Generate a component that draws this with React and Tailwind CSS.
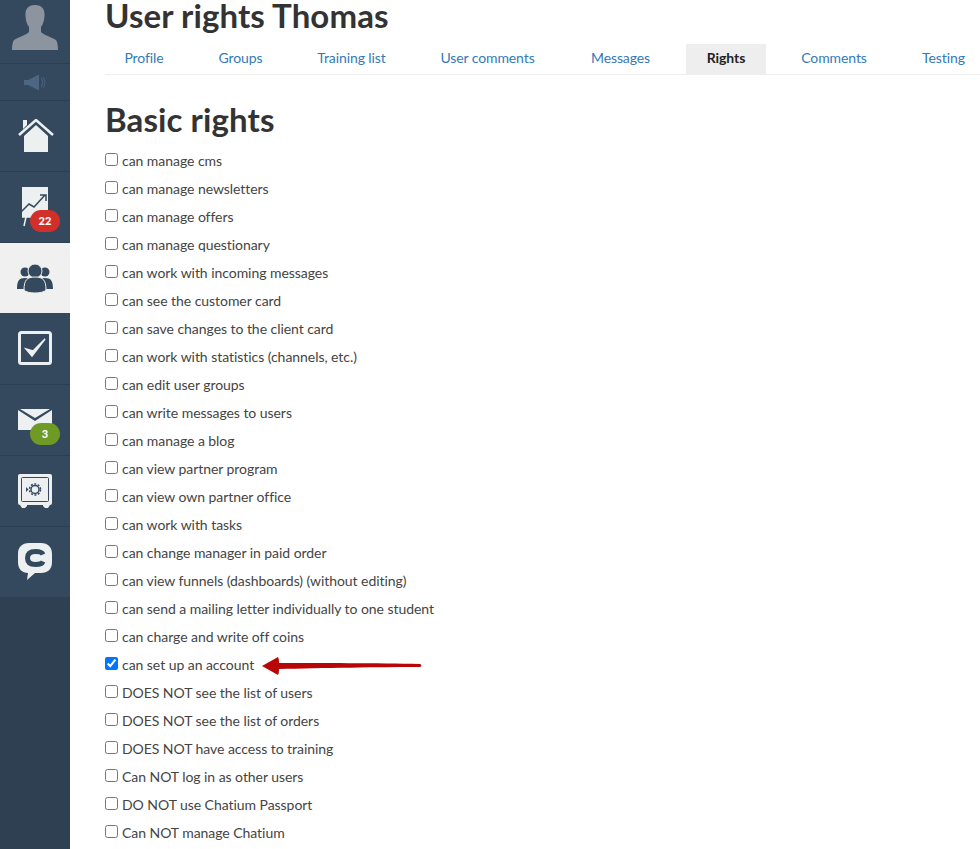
import React from 'react';

const tabs = [
  { name: 'Profile', w: 'w-[78px]' },
  { name: 'Groups', w: 'w-[85px]' },
  { name: 'Training list', w: 'w-[107px]' },
  { name: 'User comments', w: 'w-[135px]' },
  { name: 'Messages', w: 'w-[101px]' },
  { name: 'Rights', w: 'w-[80px]' },
  { name: 'Comments', w: 'w-[106px]' },
  { name: 'Testing', w: 'w-[83px]' },
];

const rights = [
  'can manage cms',
  'can manage newsletters',
  'can manage offers',
  'can manage questionary',
  'can work with incoming messages',
  'can see the customer card',
  'can save changes to the client card',
  'can work with statistics (channels, etc.)',
  'can edit user groups',
  'can write messages to users',
  'can manage a blog',
  'can view partner program',
  'can view own partner office',
  'can work with tasks',
  'can change manager in paid order',
  'can view funnels (dashboards) (without editing)',
  'can send a mailing letter individually to one student',
  'can charge and write off coins',
  'can set up an account',
  'DOES NOT see the list of users',
  'DOES NOT see the list of orders',
  'DOES NOT have access to training',
  'Can NOT log in as other users',
  'DO NOT use Chatium Passport',
  'Can NOT manage Chatium',
];

const NavItem = ({ h, active, plain, badge, badgeColor, children }) => (
  <div className={`relative flex items-center justify-center ${h} ${active ? 'bg-[#f0f0f0]' : ''} ${active || plain ? '' : 'border-b border-[#2c3e50]'}`}>
    {children}
    {badge && (
      <span className={`absolute left-[30px] top-[38px] flex h-[22px] w-[30px] items-center justify-center rounded-full text-[11px] font-black text-white ${badgeColor}`}>
        {badge}
      </span>
    )}
  </div>
);

const Sidebar = () => (
  <div className="flex w-[70px] shrink-0 flex-col bg-[#2f4052]">
    <div className="bg-[#34495e]">
      <NavItem h="h-[64px]">
        <svg width="48" height="46" viewBox="0 0 48 46" className="mt-[-7px]">
          <path d="M24 0c-7 0-10 4-9.500 11 .2 3 1 8 3.500 11v5c-2 3-11 5-15 8-1.500 2-2 6-2 10h46c0-4-.5-8-2-10-4-3-13-5-15-8v-5c2.500-3 3.300-8 3.500-11C34 4 31 0 24 0z" fill="#8b949f" />
        </svg>
      </NavItem>
      <NavItem h="h-[37px]">
        <svg width="24" height="16" viewBox="0 0 24 16">
          <rect x="1" y="6" width="4" height="5" fill="#4d6681" />
          <path d="M5 6l10-5h1v15h-1L5 11z" fill="#4d6681" />
          <path d="M18 4c2 2 2 7 0 9M20 3c2.500 3 2.500 8 0 11" stroke="#4d6681" strokeWidth="1" fill="none" />
        </svg>
      </NavItem>
      <NavItem h="h-[71px]">
        <svg width="36" height="33" viewBox="0 0 36 33" className="ml-[1px] mt-[-1px]">
          <path d="M5 1h4v5l-4 4z" fill="#ecf0f1" />
          <path d="M1 16L18 1l17 15" stroke="#ecf0f1" strokeWidth="2.500" fill="none" />
          <path d="M6 17L18 6l12 11v16H6z" fill="#ecf0f1" />
        </svg>
      </NavItem>
      <NavItem h="h-[71px]" badge="22" badgeColor="bg-[#d32f2a]">
        <svg width="28" height="42" viewBox="0 0 28 42" className="mt-[-1px] ml-[-2px]">
          <rect x="2" y="1" width="26" height="30" fill="#ecf0f1" />
          <path d="M1 26l8-8 5 3 11-12M20 9h6v6" stroke="#34495e" strokeWidth="1.500" fill="none" />
          <path d="M2 31h10M6 31l-2 9" stroke="#ecf0f1" strokeWidth="1.500" fill="none" />
        </svg>
      </NavItem>
      <NavItem h="h-[70px]" active>
        <svg width="36" height="31" viewBox="0 0 36 31">
          <circle cx="8" cy="9" r="4.500" fill="#34495e" />
          <circle cx="28" cy="9" r="4.500" fill="#34495e" />
          <path d="M0 26c0-8 2-11 8-11s8 3 8 11zM20 26c0-8 2-11 8-11s8 3 8 11z" fill="#34495e" />
          <circle cx="18" cy="8" r="7" fill="#34495e" stroke="#f0f0f0" strokeWidth="1" />
          <path d="M7 27c0-10 3-13 11-13s11 3 11 13c-3 4-19 4-22 0z" fill="#34495e" stroke="#f0f0f0" strokeWidth="1" />
        </svg>
      </NavItem>
      <NavItem h="h-[72px]">
        <svg width="34" height="34" viewBox="0 0 34 34" className="mt-[-1px]">
          <rect x="1.500" y="1.500" width="31" height="31" rx="2" fill="none" stroke="#ecf0f1" strokeWidth="3" />
          <path d="M8 18l6 7L27 8l-12 12z" fill="#ecf0f1" stroke="#ecf0f1" strokeWidth="1.500" />
        </svg>
      </NavItem>
      <NavItem h="h-[71px]" badge="3" badgeColor="bg-[#6f9a25]">
        <svg width="34" height="21" viewBox="0 0 34 21" className="mt-[-1px]">
          <path d="M0 1l17 11L34 1v20H0z" fill="#ecf0f1" />
          <path d="M2 0h30L17 9z" fill="#ecf0f1" />
        </svg>
      </NavItem>
      <NavItem h="h-[71px]">
        <svg width="34" height="34" viewBox="0 0 34 34">
          <rect x="0" y="0" width="34" height="31" rx="2" fill="#ecf0f1" />
          <path d="M2 31h7v1l-2 2H4zM25 31h7l-2 3h-3l-2-2z" fill="#ecf0f1" />
          <rect x="3.500" y="3.500" width="27" height="24" rx="1" fill="none" stroke="#34495e" strokeWidth="1" />
          <circle cx="17" cy="15.500" r="4" fill="none" stroke="#34495e" strokeWidth="1.500" />
          <circle cx="17" cy="15.500" r="5.500" fill="none" stroke="#34495e" strokeWidth="1.500" strokeDasharray="2 1.500" />
          <path d="M8 13l2.500 2.500L8 18z" fill="#34495e" />
        </svg>
      </NavItem>
      <NavItem h="h-[70px]" plain>
        <svg width="34" height="38" viewBox="0 0 34 38">
          <path d="M11 0h12c7 0 11 4 11 11v8c0 7-4 11-11 11H17l-8 7 1-7C4 30 0 26 0 19v-8C0 4 4 0 11 0z" fill="#ecf0f1" />
          <path d="M25 11.500C24 9 21 8.500 17.500 8.500 12 8.500 9.500 11 9.500 15s2.500 6.500 8 6.500c3.500 0 6.500-.5 7.500-3" fill="none" stroke="#34495e" strokeWidth="5" />
        </svg>
      </NavItem>
    </div>
  </div>
);

const App = () => (
  <div className="flex h-[849px] w-[980px] overflow-hidden bg-white font-['Lato','Open_Sans',sans-serif]">
    <Sidebar />
    <div className="min-w-0 flex-1 pl-[35px]">
      <h1 className="h-[44px] text-[33px] font-bold leading-[30px] tracking-[0.1px] text-[#333]">User rights Thomas</h1>
      <div className="flex w-[875px] gap-[15px] border-b border-[#eeeeee]">
        {tabs.map((t) => (
          <div
            key={t.name}
            className={`h-[30px] shrink-0 whitespace-nowrap text-center text-[14px] leading-[28px] tracking-[-0.1px] ${t.w} ${t.name === 'Rights' ? 'bg-[#eeeeee] font-bold text-[#222]' : 'text-[#337ab7]'}`}
          >
            {t.name}
          </div>
        ))}
      </div>
      <h2 className="mt-[24px] h-[42px] text-[33px] font-bold leading-[40px] tracking-[0.1px] text-[#333]">Basic rights</h2>
      <div className="mt-[5px] flex flex-col">
        {rights.map((r) => (
          <label key={r} className="flex h-[28px] items-center text-[14px] tracking-[-0.05px] text-[#444]">
            <input
              type="checkbox"
              defaultChecked={r === 'can set up an account'}
              className="mr-[4px] mt-[-1px] h-[13px] w-[13px] accent-[#0075ff]"
            />
            {r}
            {r === 'can set up an account' && (
              <svg width="160" height="20" viewBox="0 0 160 20" className="ml-[8px] mt-[3px]">
                <path d="M0 10L16 1c1 2 1 4 1 6 40 0 100 0 141 1 2 1 2 2 0 3-40 0-100 1-141 2 0 2 0 4-1 6z" fill="#b80606" />
              </svg>
            )}
          </label>
        ))}
      </div>
    </div>
  </div>
);

export default App;
